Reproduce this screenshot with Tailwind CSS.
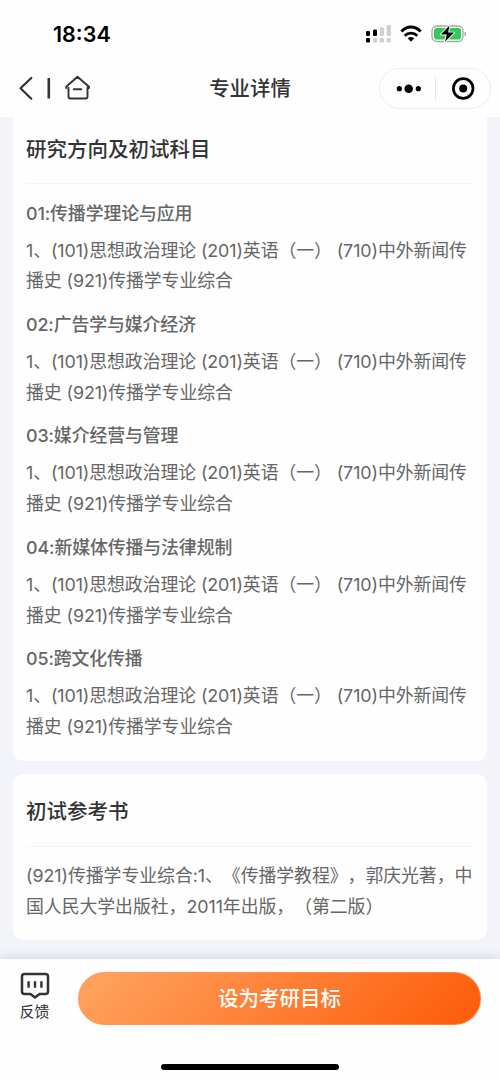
<!DOCTYPE html>
<html lang="zh-CN">
<head>
<meta charset="utf-8">
<title>专业详情</title>
<script src="https://cdn.jsdelivr.net/npm/@tailwindcss/browser@4"></script>
</head>
<body class="w-[500px] h-[1081px] overflow-hidden bg-[#f2f4f9] font-[Inter,'Noto_Sans_CJK_SC',sans-serif] [text-spacing-trim:space-all] flex flex-col">
<header class="h-[117px] shrink-0 bg-[#fefefe]">
  <div class="h-[60px] flex items-center justify-between pl-[53px] pr-[33px] pt-[7px]">
    <span class="text-[21.5px] leading-6 font-semibold text-black">18:34</span>
    <div class="flex items-center">
      <svg width="102" height="20" viewBox="0 0 102 20">
        <g fill="#000"><rect x="1" y="7" width="4" height="5" rx="1.2"/><rect x="1" y="14" width="4" height="4.5" rx="1.2"/><rect x="8" y="5.500" width="4" height="6.500" rx="1.200"/></g>
        <g fill="#d0d0d0"><rect x="14.800" y="3.500" width="4.200" height="8.500" rx="1.200"/><rect x="21.700" y="1" width="4.200" height="11" rx="1.200"/><rect x="8" y="14" width="4" height="4.500" rx="1.200"/><rect x="14.800" y="14" width="4.200" height="4.500" rx="1.200"/><rect x="21.700" y="14" width="4.200" height="4.500" rx="1.200"/></g>
        <g fill="none" stroke="#000" stroke-width="2.800"><path d="M36.400 7.500C42 1.500 50 1.500 55.600 7.500"/><path d="M39.700 11.700C43.200 8.300 48.800 8.300 52.300 11.700"/></g>
        <path d="M42.700 14.300Q46 11.900 49.300 14.300L46 17.700Z"/>
        <rect x="67" y="2" width="31" height="15.500" rx="4.800" fill="#fff" stroke="#a7a7a7" stroke-width="1.300"/>
        <rect x="69" y="4" width="27" height="11.500" rx="2.800" fill="#34c759"/>
        <path d="M99.500 7.500v5c2.200-.8 2.200-4.200 0-5Z" fill="#a7a7a7"/>
        <path d="M84.500 1.600L75.800 10.500h6L80 17.800l9.200-9.200h-6.100Z" fill="#000" stroke="#fff" stroke-width="1.800" paint-order="stroke" stroke-linejoin="round"/>
      </svg>
    </div>
  </div>
  <div class="h-[57px] grid grid-cols-[200px_100px_200px]">
    <svg class="mt-[14px] ml-4" width="80" height="30" viewBox="0 0 80 30" fill="none" stroke="#333">
      <path d="M15.300 4L4.500 14.300L15.300 24.700" stroke-width="2.200" stroke-linecap="round" stroke-linejoin="round"/>
      <path d="M32.800 4v20.500" stroke-width="2.600"/>
      <path d="M52.500 13.800v8.700q0 2 2 2h15q2 0 2-2v-8.700M50.200 14V12.800L61.500 2.700L73 12.800v1.200" stroke-width="1.900" stroke-linejoin="round" stroke-linecap="round"/>
      <path d="M57.700 15.300h7.600" stroke-width="1.900" stroke-linecap="round"/>
    </svg>
    <h1 class="text-center text-[20.4px] leading-[58px] font-medium text-[#333] whitespace-nowrap">专业详情</h1>
    <div class="ml-[79px] mt-2 w-[112px] h-[41px] rounded-full border border-[#ededed] flex items-center">
      <svg width="110" height="39" viewBox="0 0 110 39">
        <g fill="#000"><circle cx="19.300" cy="19.700" r="2.600"/><circle cx="28.700" cy="19.700" r="4.300"/><circle cx="38.300" cy="19.700" r="2.600"/><circle cx="83.200" cy="19.500" r="4"/></g>
        <circle cx="83.200" cy="19.500" r="9.800" fill="none" stroke="#000" stroke-width="2.700"/>
        <path d="M55.500 8v23" stroke="#e5e5e5"/>
      </svg>
    </div>
  </div>
</header>
<main class="h-[842px] shrink-0 px-[13px] flex flex-col gap-[13px] text-[17.9px] leading-[30.7px] text-[#666] tracking-[-0.11px]">
  <section class="h-[644px] shrink-0 bg-[#fefefe] rounded-b-[10px] px-[13px] whitespace-nowrap">
    <h2 class="h-[67px] pt-[18px] border-b border-[#f4f5f7] text-[20.5px] tracking-normal font-medium text-[#333]">研究方向及初试科目</h2>
    <div class="h-[111.4px] pt-[14.5px]"><h3 class="font-medium">01:传播学理论与应用</h3><p class="pt-[6.5px]">1、(101)思想政治理论 (201)英语（一） (710)中外新闻传<br>播史 (921)传播学专业综合</p></div>
    <div class="h-[111.4px] pt-[14.5px]"><h3 class="font-medium">02:广告学与媒介经济</h3><p class="pt-[6.5px]">1、(101)思想政治理论 (201)英语（一） (710)中外新闻传<br>播史 (921)传播学专业综合</p></div>
    <div class="h-[111.4px] pt-[14.5px]"><h3 class="font-medium">03:媒介经营与管理</h3><p class="pt-[6.5px]">1、(101)思想政治理论 (201)英语（一） (710)中外新闻传<br>播史 (921)传播学专业综合</p></div>
    <div class="h-[111.4px] pt-[14.5px]"><h3 class="font-medium">04:新媒体传播与法律规制</h3><p class="pt-[6.5px]">1、(101)思想政治理论 (201)英语（一） (710)中外新闻传<br>播史 (921)传播学专业综合</p></div>
    <div class="h-[111.4px] pt-[14.5px]"><h3 class="font-medium">05:跨文化传播</h3><p class="pt-[6.5px]">1、(101)思想政治理论 (201)英语（一） (710)中外新闻传<br>播史 (921)传播学专业综合</p></div>
  </section>
  <section class="h-[166px] shrink-0 bg-[#fefefe] rounded-[10px] px-[13px] whitespace-nowrap">
    <h2 class="h-[73px] pt-[23px] border-b border-[#f4f5f7] text-[20.5px] tracking-normal font-medium text-[#333]">初试参考书</h2>
    <p class="pt-[14px] tracking-[-0.07px]">(921)传播学专业综合:1、《传播学教程》，郭庆光著，中<br>国人民大学出版社，2011年出版，（第二版）</p>
  </section>
</main>
<footer class="h-[122px] shrink-0 bg-[#fefefe] shadow-[0_-2px_10px_rgba(0,0,0,0.12)] flex flex-col items-center">
  <div class="w-full flex pt-[13px]">
    <div class="w-[78px] pr-[9px] flex flex-col items-center text-[#333]">
      <svg width="30" height="28" viewBox="0 0 30 28" fill="none" stroke="#333"><path d="M4.500 2h21q2.500 0 2.500 2.500v15q0 2.500-2.500 2.500h-6L15 25.500L10.500 22h-6Q2 22 2 19.500v-15Q2 2 4.500 2Z" stroke-width="2.500" stroke-linejoin="round"/><path d="M8.600 9.300v6.500M15 9.300v6.500M21.400 9.300v6.500" stroke-width="2.400"/></svg>
      <span class="text-[15px] leading-[24px]">反馈</span>
    </div>
    <button class="w-[403px] h-[53px] pt-[2px] rounded-full bg-linear-[135deg,#ffa561,#fd5a08] border border-[#ff995f]/60 bg-origin-border text-white text-[20.5px] font-medium">设为考研目标</button>
  </div>
  <div class="mt-[39px] w-[178px] h-[6px] rounded-full bg-black"></div>
</footer>
</body>
</html>
